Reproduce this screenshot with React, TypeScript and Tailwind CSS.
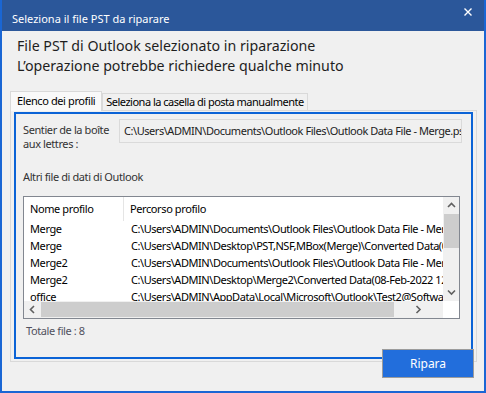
import React from 'react';

const rows = [
  { name: 'Merge', path: 'C:\\Users\\ADMIN\\Documents\\Outlook Files\\Outlook Data File - Merge.pst' },
  { name: 'Merge', path: 'C:\\Users\\ADMIN\\Desktop\\PST,NSF,MBox(Merge)\\Converted Data(08-Feb-2022 12-10)\\Merge.pst' },
  { name: 'Merge2', path: 'C:\\Users\\ADMIN\\Documents\\Outlook Files\\Outlook Data File - Merge2.pst' },
  { name: 'Merge2', path: 'C:\\Users\\ADMIN\\Desktop\\Merge2\\Converted Data(08-Feb-2022 12-40)\\Merge2.pst' },
  { name: 'office', path: 'C:\\Users\\ADMIN\\AppData\\Local\\Microsoft\\Outlook\\Test2@Softwarekeep.onmicrosoft.com.ost' },
  { name: 'Test', path: 'C:\\Users\\ADMIN\\AppData\\Local\\Microsoft\\Outlook\\Test.ost' },
];

function Chevron({ dir }: { dir: 'up' | 'down' | 'left' | 'right' }) {
  const d = {
    up: 'M1 5 L4.5 1.5 L8 5',
    down: 'M1 1.5 L4.5 5 L8 1.5',
    left: 'M5 1 L1.5 4.5 L5 8',
    right: 'M1.5 1 L5 4.5 L1.5 8',
  }[dir];
  const horiz = dir === 'left' || dir === 'right';
  return (
    <svg width={horiz ? 7 : 9} height={horiz ? 9 : 7} viewBox={horiz ? '0 0 7 9' : '0 0 9 7'}>
      <path d={d} fill="none" stroke="#606060" strokeWidth={1.6} />
    </svg>
  );
}

export default function App() {
  return (
    <div className="w-[486px] h-[393px] bg-[#f0f0f0] border-x-2 border-b-2 border-[#1a66d4] flex flex-col font-['Noto_Sans',sans-serif] text-[11px] text-black overflow-hidden">
      {/* barra del titolo */}
      <div className="h-[31px] shrink-0 bg-[#2b579a] flex items-start justify-between pl-[10px] pr-[12px] text-white leading-[16px]">
        <span className="mt-[11px]">Seleziona il file PST da riparare</span>
        <svg width="8" height="8" viewBox="0 0 8 8" className="mt-[8px]">
          <path d="M0.5 0.5 L7.5 7.5 M7.5 0.5 L0.5 7.5" stroke="#fff" strokeWidth={1.4} />
        </svg>
      </div>

      {/* intestazione */}
      <div className="mt-[5px] pl-[15px] text-[14.2px] leading-[20px] text-[#1e1e1e]">
        <div>File PST di Outlook selezionato in riparazione</div>
        <div>L’operazione potrebbe richiedere qualche minuto</div>
      </div>

      {/* schede */}
      <div className="mt-[15px] ml-[8px] flex items-end h-[19px]">
        <div className="relative z-10 h-[20px] mb-[-1px] bg-[#f9f9f9] border-x border-t border-[#d9d9d9] px-[6px] leading-[18px] tracking-[-0.4px] whitespace-nowrap">
          Elenco dei profili
        </div>
        <div className="h-[17px] bg-[#f0f0f0] border-x border-t border-[#d9d9d9] px-[3px] leading-[16px] tracking-[-0.5px] whitespace-nowrap">
          Seleziona la casella di posta manualmente
        </div>
      </div>

      {/* pannello */}
      <div className="ml-[8px] w-[467px] h-[252px] shrink-0 border border-[#d9d9d9] px-[3px] pt-[1px]">
        <div className="h-[247px] border-2 border-[#0b63d6] flex flex-col pl-[7px] tracking-[-0.4px]">
          <div className="mt-[5px] flex items-start">
            <div className="w-[96px] mt-[4px] leading-[14px] text-[#333]">
              Sentier de la boîte
              <br />
              aux lettres :
            </div>
            <div className="w-[343px] h-[24px] border border-[#dadada] bg-[#f0f0f0] pl-[4px] leading-[22px] whitespace-nowrap overflow-hidden text-[#222] tracking-[-0.45px]">
              C:\Users\ADMIN\Documents\Outlook Files\Outlook Data File - Merge.pst
            </div>
          </div>

          <div className="mt-[19px] leading-[14px] text-[#333]">Altri file di dati di Outlook</div>

          {/* elenco */}
          <div className="mt-[12px] w-[437px] h-[123px] border border-[#828790] bg-white flex flex-col">
            <div className="flex h-[104px]">
              <div className="w-[419px] overflow-hidden">
                <div className="flex h-[24px] items-center">
                  <div className="w-[100px] pl-[6px] border-r border-[#e5e5e5] h-full flex items-center">Nome profilo</div>
                  <div className="pl-[6px]">Percorso profilo</div>
                </div>
                {rows.map((r, i) => (
                  <div key={i} className="flex h-[17px] items-center whitespace-nowrap">
                    <div className="w-[100px] shrink-0 pl-[6px]">{r.name}</div>
                    <div className="pl-[7px] tracking-[-0.45px]">{r.path}</div>
                  </div>
                ))}
              </div>
              <div className="w-[16px] bg-[#f0f0f0] flex flex-col items-center">
                <div className="h-[17px] flex items-center justify-center">
                  <Chevron dir="up" />
                </div>
                <div className="w-[15px] h-[34px] bg-[#cdcdcd]" />
                <div className="flex-1" />
                <div className="h-[17px] flex items-center justify-center">
                  <Chevron dir="down" />
                </div>
              </div>
            </div>
            <div className="flex h-[17px]">
              <div className="w-[419px] bg-[#f0f0f0] flex items-center">
                <div className="w-[17px] flex justify-center">
                  <Chevron dir="left" />
                </div>
                <div className="w-[353px] h-[15px] bg-[#cdcdcd]" />
                <div className="flex-1 flex justify-center">
                  <Chevron dir="right" />
                </div>
              </div>
              <div className="w-[16px] bg-white" />
            </div>
          </div>

          <div className="mt-[5px] pl-[3px] leading-[14px] text-[#50505e]">Totale file : 8</div>
        </div>
      </div>

      <button className="self-end mr-[10px] mt-[-13px] w-[92px] h-[29px] bg-[#226edc] border border-[#9c9c9c] text-white text-[12px] relative z-10">
        Ripara
      </button>
    </div>
  );
}
